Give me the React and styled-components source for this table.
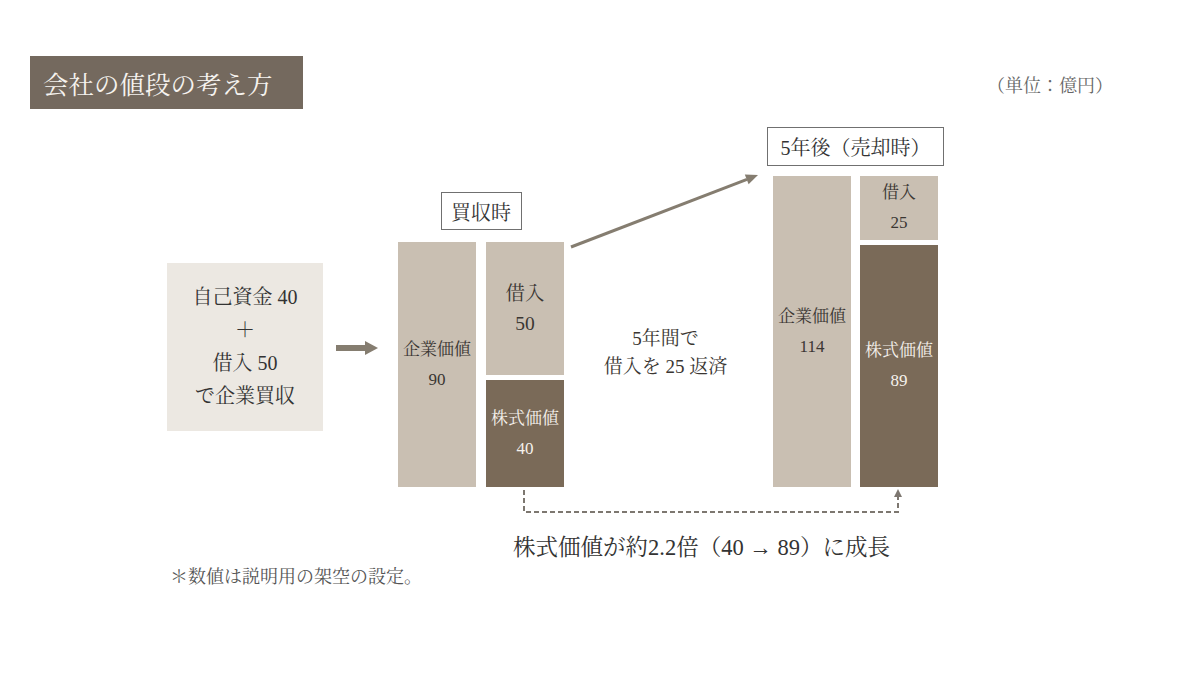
import React from "react";
import styled, { createGlobalStyle } from "styled-components";

const FONT = `"Liberation Serif", "Times New Roman", "Noto Serif CJK JP", "Noto Sans CJK JP", serif`;

const Global = createGlobalStyle`
  html, body { margin: 0; padding: 0; background: #ffffff; }
  body { font-family: ${FONT}; color: #333; }
`;

const Slide = styled.div`
  width: 1200px;
  height: 675px;
  box-sizing: border-box;
  padding-top: 56px;
  background: #fff;
  overflow: hidden;
  font-family: ${FONT};
`;

const Header = styled.div`
  display: flex;
  align-items: center;
  justify-content: space-between;
  padding: 0 87px 0 30px;
`;

const TitleBox = styled.div`
  width: 273px;
  height: 53px;
  box-sizing: border-box;
  background: #74695e;
  color: #f6f3ef;
  font-size: 25.5px;
  display: flex;
  align-items: center;
  padding-left: 13px;
`;

const Unit = styled.div`
  font-size: 18px;
  color: #666;
  margin-top: 3px;
`;

const Diagram = styled.div`
  display: flex;
  align-items: flex-end;
  height: 360px;
  margin-top: 18px;
`;

const StartBox = styled.div`
  margin-left: 167px;
  margin-bottom: 56px;
  width: 156px;
  height: 168px;
  background: #ece8e2;
  display: flex;
  flex-direction: column;
  align-items: center;
  justify-content: center;
  font-size: 20px;
  line-height: 33px;
  color: #333;
`;

const ThickArrow = styled.svg`
  margin-left: 13px;
  margin-bottom: 131px;
  display: block;
`;

const Group = styled.div`
  display: flex;
  flex-direction: column;
  align-items: center;
  margin-left: ${(p) => p.$ml}px;
  width: ${(p) => p.$w}px;
`;

const Label = styled.div`
  box-sizing: border-box;
  width: ${(p) => p.$w}px;
  height: ${(p) => p.$h}px;
  border: 1.5px solid #707070;
  display: flex;
  align-items: center;
  justify-content: center;
  font-size: 20px;
  color: #333;
  margin-bottom: ${(p) => p.$gap}px;
  white-space: nowrap;
`;

const Bars = styled.div`
  display: flex;
  gap: ${(p) => p.$gap}px;
`;

const Stack = styled.div`
  display: flex;
  flex-direction: column;
  gap: 5px;
`;

const Bar = styled.div`
  width: 78px;
  height: ${(p) => p.$h}px;
  background: ${(p) => (p.$dark ? "#7a6a58" : "#c9bfb2")};
  color: ${(p) => (p.$dark ? "#f5f1ec" : "#3a3632")};
  display: flex;
  flex-direction: column;
  align-items: center;
  justify-content: center;
  font-size: ${(p) => p.$fs || 17}px;
  line-height: 30px;
  white-space: nowrap;
`;

const MidColumn = styled.div`
  width: 203px;
  height: 360px;
  display: flex;
  flex-direction: column;
  align-items: center;
`;

const DiagArrow = styled.svg`
  display: block;
  align-self: flex-start;
`;

const MidText = styled.div`
  margin-top: 68px;
  font-size: 19px;
  line-height: 28px;
  text-align: center;
  color: #3a3632;
`;

const Connector = styled.svg`
  display: block;
  margin-left: 518px;
  margin-top: 1px;
`;

const Caption = styled.div`
  padding-left: 513px;
  margin-top: 15px;
  font-size: 22.5px;
  line-height: 30px;
  color: #333;
  white-space: nowrap;
`;

const Note = styled.div`
  padding-left: 170px;
  margin-top: 2px;
  font-size: 18px;
  line-height: 24px;
  color: #555;
`;

function BarCell({ h, dark, fs, lines }) {
  return (
    <Bar $h={h} $dark={dark} $fs={fs}>
      {lines.map((l, i) => (
        <span key={i}>{l}</span>
      ))}
    </Bar>
  );
}

export default function App() {
  return (
    <>
      <Global />
      <Slide>
        <Header>
          <TitleBox>会社の値段の考え方</TitleBox>
          <Unit>（単位：億円）</Unit>
        </Header>

        <Diagram>
          <StartBox>
            <span>自己資金 40</span>
            <span>＋</span>
            <span>借入 50</span>
            <span>で企業買収</span>
          </StartBox>

          <ThickArrow width="42" height="16" viewBox="0 0 42 16">
            <rect x="0" y="5" width="31" height="6" fill="#857d70" />
            <polygon points="29,1 42,8 29,15" fill="#857d70" />
          </ThickArrow>

          <Group $ml={20} $w={166}>
            <Label $w={81} $h={38} $gap={12}>買収時</Label>
            <Bars $gap={10}>
              <BarCell h={245} lines={["企業価値", "90"]} />
              <Stack>
                <BarCell h={133} fs={19.5} lines={["借入", "50"]} />
                <BarCell h={107} dark lines={["株式価値", "40"]} />
              </Stack>
            </Bars>
          </Group>

          <MidColumn>
            <DiagArrow width="203" height="130" viewBox="0 0 203 130">
              <line x1="7" y1="120" x2="183" y2="52.3" stroke="#857d70" strokeWidth="3" />
              <polygon points="194,48 184.6,57.2 180.8,47.4" fill="#857d70" />
            </DiagArrow>
            <MidText>
              5年間で
              <br />
              借入を 25 返済
            </MidText>
          </MidColumn>

          <Group $ml={0} $w={177}>
            <Label $w={177} $h={39} $gap={10}>5年後（売却時）</Label>
            <Bars $gap={9}>
              <BarCell h={311} lines={["企業価値", "114"]} />
              <Stack>
                <BarCell h={64} lines={["借入", "25"]} />
                <BarCell h={242} dark lines={["株式価値", "89"]} />
              </Stack>
            </Bars>
          </Group>
        </Diagram>

        <Connector width="390" height="30" viewBox="0 0 390 30">
          <path
            d="M6 2 V24 H380 V8"
            fill="none"
            stroke="#7d7770"
            strokeWidth="2"
            strokeDasharray="5 3"
          />
          <polygon points="380,1 376,9 384,9" fill="#7d7770" />
        </Connector>

        <Caption>株式価値が約2.2倍（40 → 89）に成長</Caption>
        <Note>＊数値は説明用の架空の設定。</Note>
      </Slide>
    </>
  );
}
